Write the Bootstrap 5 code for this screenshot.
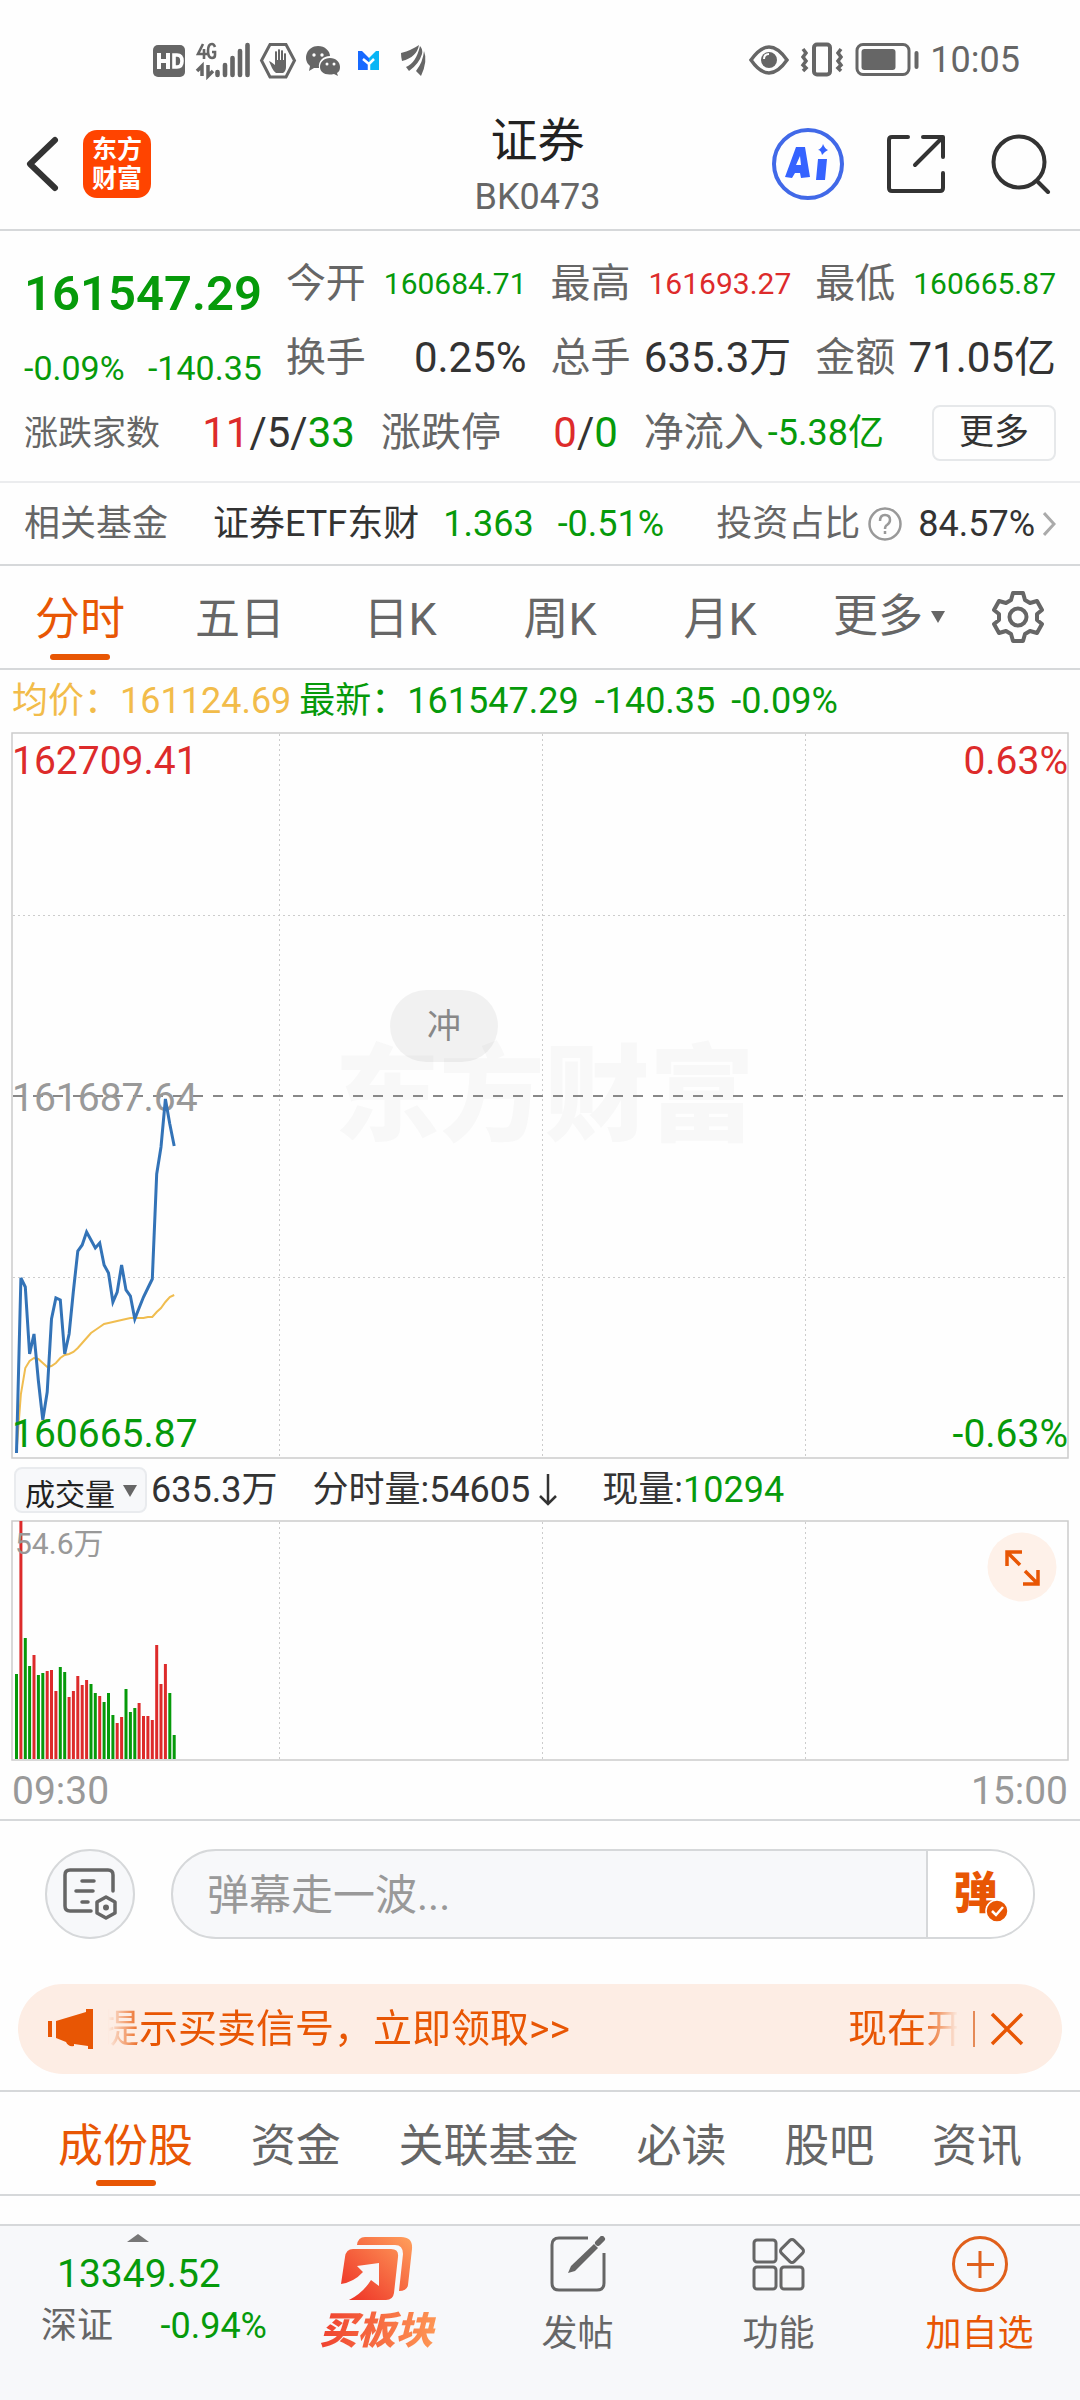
<!DOCTYPE html>
<html lang="zh-CN">
<head>
<meta charset="utf-8">
<meta name="viewport" content="width=device-width, initial-scale=1">
<title>证券 BK0473</title>
<link rel="stylesheet" href="https://cdn.jsdelivr.net/npm/bootstrap@5.3.0/dist/css/bootstrap.min.css">
<style>
:root{--up:#dd2b2b;--down:#069a0a;--accent:#e85604;--ink:#333;--soft:#666;--faint:#999;--line:#d6d8da;--pale:#f7f8fa}
body{font-family:Roboto,"Noto Sans CJK SC",sans-serif;color:var(--ink);font-size:36px;line-height:48px;background:#fefefe}
a{color:inherit;text-decoration:none}
button{background:none;border:0;padding:0;color:inherit}
svg{display:block;flex:none}
.up{color:var(--up)}.down{color:var(--down)}.soft{color:var(--soft)}.faint{color:var(--faint)}.accent{color:var(--accent)}
.fs-30{font-size:30px}.fs-34{font-size:34px}.fs-39{font-size:39px}.fs-40{font-size:40px}.fs-42{font-size:42px}.fs-45{font-size:45px}
.rule-b{border-bottom:2px solid var(--line)}
.rule-t{border-top:2px solid var(--line)}
.status-bar{height:96px;padding:24px 60px 0 152px}
.title-bar{height:135px;padding:2px 29px 0 24px}
.title-bar .side{flex:1 1 0}
.app-logo{width:68px;height:68px;border-radius:14px;background:#ff4400;color:#fff;font-size:25px;line-height:29px;font-weight:700;text-align:center;padding-top:5px;margin-left:23px}
.title-bar h1{font-size:47px;line-height:60px;color:#222}
.heading{padding-top:6px}
.code{line-height:52px}
.share{margin:0 46px 0 43px}
.quote{padding:25px 24px 18px}
.quote-grid{display:grid;grid-template-columns:237fr repeat(3,241fr);column-gap:24px;grid-auto-rows:56px;row-gap:18px}
.price{font-size:49px;font-weight:600;line-height:56px;padding-top:10px}
.change{padding-top:14px}
.stats{column-gap:26px;margin-top:17px;height:60px}
.stats .rises{flex:331 1 0}.stats .limits{flex:237 1 0}
.more-btn{width:124px;height:56px;border:2px solid #e6e8ea;border-radius:8px;font-size:35px;line-height:50px;margin-left:22px}
.fund{height:85px;padding:0 24px;border-top:2px solid #ebecee}
.fund-name{margin-left:45px}
.period{height:104px;padding-right:22px}
.period>*{flex:160 1 0;height:102px;line-height:108px;text-align:center;position:relative}
.period .wide{flex-grow:178}.period .slim{flex-grow:80}
.on-tab{position:relative}
.on-tab::after{content:"";position:absolute;left:50%;bottom:8px;width:60px;height:6px;margin-left:-30px;border-radius:3px;background:var(--accent)}
.tri{display:inline-block;width:0;height:0;border:7px solid transparent;border-top:12px solid currentColor;border-bottom:0}
.legend-row{height:62px;padding:0 12px;color:var(--down)}
.avg{color:#f2bc4a}
.plot{margin:0 11px;position:relative}
.plot svg{width:100%;height:auto}
.mark-text{position:absolute;left:30%;top:42%;padding-left:6px;font-size:105px;line-height:120px;font-weight:900;color:#f8f8f8}
.bullet{position:absolute;left:379px;top:258px;width:108px;height:72px;border-radius:36px;background:rgba(0,0,0,.05);color:#888;font-size:34px;line-height:72px;text-align:center}
.vol-row{height:61px;padding:0 14px}
.picker{border:2px solid #e9ebee;border-radius:8px;background:var(--pale);width:133px;height:46px}
.picker select{appearance:none;border:0;background:none;color:#222;font-size:30px;line-height:30px;width:100%;height:42px;padding:0 0 9px 9px;outline:0}
.picker .tri{position:absolute;right:8px;top:16px;color:#666;pointer-events:none}
.minute-vol{margin-left:35px}.now-vol{margin-left:44px}
.expand{position:absolute;right:12px;top:12px}
.times{height:60px;padding:2px 12px 0}
.chat{padding:28px 45px 45px;gap:36px}
.round-btn{width:90px;height:90px;border:2px solid var(--line);border-radius:50%;background:var(--pale)}
.chat-box{height:90px;border:2px solid var(--line);border-radius:45px;background:var(--pale);overflow:hidden}
.chat-box input{border:0;background:none;outline:0;padding:4px 0 0 34px;font-size:42px;color:var(--ink);min-width:0}
.chat-box input::placeholder{color:#999;opacity:1}
.send{width:107px;background:#fff;border-left:2px solid var(--line);font-size:44px;font-weight:800;color:var(--accent);position:relative;line-height:84px;padding-right:10px}
.send svg{position:absolute;left:57px;top:48px}
.notice{height:90px;margin:0 18px 16px;border-radius:45px;background:#fdede4;color:var(--accent);font-size:39px;padding:0 38px 0 30px}
.roll{overflow:hidden;white-space:nowrap;margin-left:6px;-webkit-mask-image:linear-gradient(90deg,transparent 8px,#000 44px);mask-image:linear-gradient(90deg,transparent 8px,#000 44px)}
.cut{overflow:hidden;white-space:nowrap;width:109px;-webkit-mask-image:linear-gradient(90deg,#000 74px,transparent 110px);mask-image:linear-gradient(90deg,#000 74px,transparent 110px)}
.bar-v{width:2px;height:36px;background:#e58a57;margin:0 15px 0 16px}
.sections{height:106px;padding:0 58px;line-height:109px}
.sections a{height:102px}
.dock{height:176px;background:var(--pale)}
.dock-item{flex:1 1 0}
.index{width:276px;flex:none;padding:8px 9px 0 41px}
.dock-item{padding-top:10px;line-height:52px}
.dock-item svg{margin-bottom:12px}
.buy{line-height:48px;margin-top:-7px;font-weight:900;font-style:italic;font-size:38px;background:linear-gradient(100deg,#ee3a2c,#ff9b56);-webkit-background-clip:text;background-clip:text;color:transparent;padding:0 4px}
</style>
</head>
<body class="d-flex flex-column min-vh-100">

<div class="status-bar d-flex align-items-center justify-content-between soft">
  <svg width="280" height="40" viewBox="152 39 280 40" fill="#666">
    <rect x="153" y="44" width="32" height="32" rx="5"/>
    <path d="M159 52v16M168 52v16M159 60h9" fill="none" stroke="#fff" stroke-width="4"/>
    <path d="M174 54h3q5 0 5 6t-5 6h-3z" fill="none" stroke="#fff" stroke-width="3.600"/>
    <path d="M203 43l-5 10h9M204 48v10M215 46q-1-3-3-3-4 0-4 7t4 7q3 0 3-3v-3h-3" fill="none" stroke="#666" stroke-width="2.600"/>
    <path d="M202 75V65l-5 5M208 64v11l5-5" fill="none" stroke="#666" stroke-width="3.500"/>
    <path d="M217.500 71v3M225 64v10M232.500 57v17M240 50v24M247.500 44v30" stroke="#666" stroke-width="4.600" stroke-linecap="round"/>
    <path d="M270 43.500h16l8.500 16-8.500 16.500h-16l-8.500-16.500z" fill="none" stroke="#666" stroke-width="3"/>
    <path d="M271 61l-2-1 3 7q2 4 4 5h7q3-2 3-6V53q-1-2-2 0v6h-1v-9q-1-2-2 0v9h-1V49q-1-2-2 0v10h-1v-8q-1-2-2 0v13z"/>
    <path d="M318 45c7 0 12 5 12 10-7 0-12 5-11 12l-5 0-5 3 1-5c-8-7-3-20 8-20z"/>
    <path d="M330 57c6 0 10 4 10 9 0 3-1 5-3 6l1 3-4-2c-9 2-14-2-14-7s4-9 10-9z"/>
    <g fill="#fff"><circle cx="314" cy="54" r="1.700"/><circle cx="322" cy="54" r="1.700"/><circle cx="327" cy="63" r="1.500"/><circle cx="334" cy="63" r="1.500"/></g>
    <path d="M358 50h4l7 7v12h-11z" fill="#1769ff"/><path d="M369 57l7-7h3v19h-10z" fill="#09b5f5"/><path d="M363 58l6 5 5-5M369 62v7" stroke="#fff" stroke-width="2.500" fill="none"/>
    <path d="M401 52q11-3 18-8-2 12-17 16-1-4-1-8zM420 45q3 3 2 8-3 10-13 17l-3-4q10-4 14-21zM424 50q4 10-3 25l-5-5q7-9 8-20z"/>
  </svg>
  <div class="d-flex align-items-center">
    <svg width="180" height="40" viewBox="747 39 180 40" fill="none" stroke="#666">
      <path d="M752 59q18-26 36 0-18 26-36 0z" stroke-width="3.500"/><circle cx="770" cy="59" r="8" fill="#666" stroke="none"/><path d="M765 58q0-5 5-5" stroke="#fff" stroke-width="2"/>
      <rect x="815" y="43.500" width="16" height="30" rx="3" stroke-width="4"/>
      <path d="M804 48l3 4-3 4 3 4-3 4 3 3-3 3M842 48l-3 4 3 4-3 4 3 4-3 3 3 3" stroke-width="3.500"/>
      <rect x="858" y="43.500" width="52" height="30" rx="6" stroke-width="3"/><rect x="862.500" y="48" width="34" height="21" rx="3" fill="#666" stroke="none"/><path d="M917.500 52v14" stroke-width="4" stroke-linecap="round"/>
    </svg>
    <span class="ps-1">10:05</span>
  </div>
</div>

<header class="title-bar d-flex align-items-center rule-b">
  <div class="side d-flex align-items-center">
    <button type="button" aria-label="返回"><svg width="36" height="60" viewBox="0 0 36 60" fill="none" stroke="#333" stroke-width="6" stroke-linecap="round" stroke-linejoin="round"><path d="M31 6L6 30l25 24"/></svg></button>
    <div class="app-logo">东方<br>财富</div>
  </div>
  <div class="heading text-center">
    <h1 class="m-0 fw-normal">证券</h1>
    <div class="soft code">BK0473</div>
  </div>
  <div class="side d-flex align-items-center justify-content-end">
    <button type="button" aria-label="AI"><svg width="72" height="72" viewBox="0 0 72 72"><circle cx="36" cy="36" r="34" fill="none" stroke="#4169e8" stroke-width="4"/><path fill="#3563ff" fill-rule="evenodd" d="M24 19h9l5 30-9 1-1-5h-5l-3 5-7-1zM28 28l-4 9h5zM46 31h9l-2 21h-9zM51 16q2 5 5 6-4 2-6 5-1-5-4-5 4-2 5-6z"/></svg></button>
    <button type="button" aria-label="分享" class="share"><svg width="58" height="58" viewBox="0 0 58 58" fill="none" stroke="#333" stroke-width="4" stroke-linecap="round" stroke-linejoin="round"><path d="M21 2H5q-3 0-3 3v48q0 3 3 3h48q3 0 3-3V38M36 2h20v20M55 3L28 30"/></svg></button>
    <button type="button" aria-label="搜索"><svg width="60" height="60" viewBox="0 0 60 60" fill="none" stroke="#333" stroke-width="4" stroke-linecap="round"><circle cx="28" cy="28" r="25.500"/><path d="M47 48l10 10"/></svg></button>
  </div>
</header>

<section class="quote">
  <div class="quote-grid text-nowrap">
    <div class="price down">161547.29</div>
    <div class="d-flex justify-content-between align-items-center"><span class="fs-40 soft">今开</span><span class="fs-30 down">160684.71</span></div>
    <div class="d-flex justify-content-between align-items-center"><span class="fs-40 soft">最高</span><span class="fs-30 up">161693.27</span></div>
    <div class="d-flex justify-content-between align-items-center"><span class="fs-40 soft">最低</span><span class="fs-30 down">160665.87</span></div>
    <div class="change d-flex justify-content-between fs-34 down"><span>-0.09%</span><span>-140.35</span></div>
    <div class="d-flex justify-content-between align-items-center"><span class="fs-40 soft">换手</span><span class="fs-42">0.25%</span></div>
    <div class="d-flex justify-content-between align-items-center"><span class="fs-40 soft">总手</span><span class="fs-42">635.3万</span></div>
    <div class="d-flex justify-content-between align-items-center"><span class="fs-40 soft">金额</span><span class="fs-42">71.05亿</span></div>
  </div>
  <div class="stats d-flex align-items-center text-nowrap">
    <div class="rises d-flex align-items-center justify-content-between"><span class="fs-34 soft">涨跌家数</span><span class="fs-42"><span class="up">11</span>/5/<span class="down">33</span></span></div>
    <div class="limits d-flex align-items-center justify-content-between"><span class="fs-40 soft">涨跌停</span><span class="fs-42"><span class="up">0</span>/<span class="down">0</span></span></div>
    <div class="d-flex align-items-center"><span class="fs-40 soft me-1">净流入</span><span class="down">-5.38亿</span></div>
    <button type="button" class="more-btn">更多</button>
  </div>
</section>

<a href="#" class="fund d-flex align-items-center rule-b text-nowrap">
  <span class="soft">相关基金</span>
  <span class="fund-name">证券ETF东财</span>
  <span class="down ms-4">1.363</span>
  <span class="down ms-4">-0.51%</span>
  <span class="soft ms-auto">投资占比</span>
  <svg class="ms-2 me-3" width="34" height="34" viewBox="0 0 34 34" fill="none" stroke="#999" stroke-width="2.500"><circle cx="17" cy="17" r="15.500"/><path d="M12 14q0-6 5-6t5 5q0 3-3 5-2 1-2 4M17 24v3"/></svg>
  <span>84.57%</span>
  <svg class="ms-2" width="13" height="26" viewBox="0 0 13 26" fill="none" stroke="#aaa" stroke-width="3"><path d="M1 2l10 11L1 24"/></svg>
</a>

<nav class="period d-flex align-items-center rule-b fs-45 soft text-nowrap">
  <a href="#" class="on-tab accent" aria-current="page">分时</a>
  <a href="#">五日</a>
  <a href="#">日K</a>
  <a href="#">周K</a>
  <a href="#">月K</a>
  <button type="button" class="wide d-flex align-items-center justify-content-center">更多<span class="tri ms-2"></span></button>
  <button type="button" class="slim d-flex align-items-center justify-content-center" aria-label="设置"><svg width="54" height="54" viewBox="0 0 54 54" fill="none" stroke="#666" stroke-width="4" stroke-linejoin="round"><path d="M22 3h10l2 7 5 3 7-2 5 9-5 4v6l5 4-5 9-7-2-5 3-2 7H22l-2-7-5-3-7 2-5-9 5-4v-6l-5-4 5-9 7 2 5-3z"/><circle cx="27" cy="27" r="8.500"/></svg></button>
</nav>

<div class="legend-row d-flex align-items-center text-nowrap">
  <span class="avg">均价：161124.69</span>
  <span class="ms-2">最新：161547.29</span>
  <span class="ms-3">-140.35</span>
  <span class="ms-3">-0.09%</span>
</div>

<div class="plot">
  <div class="mark-text">东方财富</div>
  <svg class="position-relative" viewBox="0 0 1058 727" fill="none" role="img" aria-label="分时走势">
    <path d="M1 1h1056v725H1z" stroke="#ccc" stroke-width="1.500"/>
    <path d="M268.500 2v723M531.500 2v723M794.500 2v723M2 183.500h1054M2 545.500h1054" stroke="#ccc" stroke-dasharray="2 3"/>
    <path d="M2 364h1054" stroke="#888" stroke-width="2" stroke-dasharray="10 10"/>
    <polyline id="avgLine" stroke="#f0bd50" stroke-width="2"/>
    <g font-size="39" font-family="Roboto">
      <text x="1" y="42" fill="#dd2b2b">162709.41</text>
      <text x="1057" y="42" text-anchor="end" fill="#dd2b2b">0.63%</text>
      <text x="1" y="379" fill="#999">161687.64</text>
    </g>
    <polyline id="priceLine" stroke="#3373b7" stroke-width="3"/>
    <g font-size="39" font-family="Roboto" fill="#069a0a">
      <text x="1" y="715">160665.87</text>
      <text x="1057" y="715" text-anchor="end">-0.63%</text>
    </g>
  </svg>
  <div class="bullet">冲</div>
</div>

<div class="vol-row d-flex align-items-center text-nowrap">
  <div class="picker position-relative"><select aria-label="指标"><option>成交量</option></select><span class="tri"></span></div>
  <span class="ps-1">635.3万</span>
  <span class="minute-vol">分时量:54605</span>
  <svg class="ms-2" width="20" height="36" viewBox="0 0 20 36" fill="none" stroke="#333" stroke-width="2.500"><path d="M10 2v30M2 24l8 8 8-8"/></svg>
  <span class="now-vol">现量:<span class="down">10294</span></span>
</div>

<div class="plot">
  <svg viewBox="0 0 1058 241" fill="none" role="img" aria-label="成交量">
    <path d="M1 1h1056v239H1z" stroke="#ccc" stroke-width="1.500"/>
    <path d="M268.500 2v237M531.500 2v237M794.500 2v237" stroke="#ccc" stroke-dasharray="2 3"/>
    <g id="volBars"></g>
    <text x="4" y="34" font-size="30" font-family="Roboto,'Noto Sans CJK SC'" fill="#999">54.6万</text>
  </svg>
  <button type="button" class="expand" aria-label="放大"><svg width="70" height="70" viewBox="0 0 70 70"><circle cx="35" cy="35" r="34.500" fill="#fef1e9"/><path d="M20 34V20h15M21 21l12 12M51 38v14H36M50 51L38 39" fill="none" stroke="#e85604" stroke-width="3.500"/></svg></button>
</div>

<div class="times d-flex justify-content-between align-items-center fs-39 faint rule-b"><span>09:30</span><span>15:00</span></div>

<div class="chat d-flex align-items-center">
  <button type="button" class="round-btn d-flex align-items-center justify-content-center flex-shrink-0" aria-label="弹幕设置"><svg width="56" height="52" viewBox="0 0 56 52" fill="none" stroke="#666" stroke-width="3.500" stroke-linecap="round"><path d="M29 43H8q-5 0-5-5V7q0-5 5-5h38q5 0 5 5v16M20 13h12M14 23h17M20 34h6"/><path d="M44 29l9 5v11l-9 5-9-5V34z" stroke-linejoin="round"/><circle cx="44" cy="39.500" r="2" fill="#666" stroke-width="2"/></svg></button>
  <div class="chat-box d-flex flex-grow-1">
    <input class="flex-grow-1" type="text" placeholder="弹幕走一波..." aria-label="弹幕">
    <button type="button" class="send">弹<svg width="24" height="24" viewBox="0 0 24 24"><circle cx="12" cy="12" r="11" fill="#e85604" stroke="#fff" stroke-width="1.500"/><path d="M7 12l4 4 7-8" fill="none" stroke="#fff" stroke-width="2.500"/></svg></button>
  </div>
</div>

<div class="notice d-flex align-items-center">
  <svg width="46" height="40" viewBox="0 0 46 40" fill="#e85604"><path d="M0 12h4v16H0zM8 12L38 3v-3h7v40h-5v-3l-14-2v2q-6 1-8-4l-10-4z"/></svg>
  <div class="roll flex-grow-1">提示买卖信号，立即领取&gt;&gt;</div>
  <div class="cut">现在开</div>
  <span class="bar-v"></span>
  <button type="button" aria-label="关闭"><svg width="34" height="34" viewBox="0 0 34 34" stroke="#e85604" stroke-width="3.500"><path d="M2 2l30 30M32 2L2 32"/></svg></button>
</div>

<nav class="sections d-flex justify-content-between rule-t rule-b fs-45 soft text-nowrap">
  <a href="#" class="on-tab accent" aria-current="page">成份股</a>
  <a href="#">资金</a>
  <a href="#">关联基金</a>
  <a href="#">必读</a>
  <a href="#">股吧</a>
  <a href="#">资讯</a>
</nav>

<footer class="dock d-flex rule-t mt-auto text-nowrap soft">
  <a href="#" class="index">
    <svg width="194" height="8" viewBox="0 0 194 8"><path d="M86 8L97 0l11 8z" fill="#777"/></svg>
    <div class="fs-39 down ps-3 pt-2">13349.52</div>
    <div class="d-flex justify-content-between pt-1"><span>深证</span><span class="down">-0.94%</span></div>
  </a>
  <a href="#" class="dock-item d-flex flex-column align-items-center">
    <svg width="72" height="66" viewBox="0 0 72 66"><defs><linearGradient id="g" x1="0" y1="1" x2="1" y2="0"><stop offset="0" stop-color="#ed2d24"/><stop offset="1" stop-color="#ffa05c"/></linearGradient></defs><path fill="url(#g)" d="M16 9q1-8 8-8h36q12 0 11 12l-4 36q-1 6-9 6l4-37q0-9-8-9zM4 21q1-8 8-8h38q8 0 7 8l-4 36q-1 7-8 7H8q14-7 22-20l8 6V27l-22 3 6 6Q13 46 0 48z"/></svg>
    <span class="buy">买板块</span>
  </a>
  <a href="#" class="dock-item d-flex flex-column align-items-center">
    <svg width="56" height="56" viewBox="0 0 56 56" fill="none" stroke="#666" stroke-width="3"><path d="M38 2H9Q2 2 2 9v38q0 7 7 7h38q7 0 7-7V17"/><path d="M18 37l3-7L44 8l4 4-23 23z" fill="#666" stroke="none"/><path d="M48 7l4-4" stroke-width="6" stroke-linecap="round"/></svg>
    <span class="pt-1">发帖</span>
  </a>
  <a href="#" class="dock-item d-flex flex-column align-items-center">
    <svg width="56" height="56" viewBox="0 0 56 56" fill="none" stroke="#666" stroke-width="3"><rect x="3" y="4" width="22" height="22" rx="3"/><rect x="3" y="31" width="22" height="22" rx="3"/><rect x="30" y="31" width="22" height="22" rx="3"/><rect x="32" y="6" width="18" height="18" rx="3" transform="rotate(45 41 15)"/></svg>
    <span class="pt-1">功能</span>
  </a>
  <a href="#" class="dock-item d-flex flex-column align-items-center accent">
    <svg width="58" height="56" viewBox="0 0 58 56" fill="none" stroke="#e0601c" stroke-width="3"><circle cx="29" cy="28" r="26.500"/><path d="M29 15v27M16 28.500h27"/></svg>
    <span class="pt-1">加自选</span>
  </a>
</footer>

<script>
// One sample per minute from 09:30; the session holds 241 of them across the plot.
const step = 4.38, start = 5.5;
const price = [721,546,555,622,602,649,688,660,587,566,568,622,602,559,519,513,500,508,516,511,533,541,570,560,533,558,564,587,576,565,556,547,442,415,367,392,414];
const avg = [720,662,636,629,626,627,631,635,634,631,626,623,622,620,616,611,606,601,598,595,592,591,590,589,588,587,586,586,586,586,585,585,580,576,570,565,563];
const vol = [85,238,121,93,104,84,86,88,89,68,92,87,62,68,83,74,79,75,66,63,57,66,44,36,42,70,47,51,56,43,43,39,114,75,95,66,24];
const dir = "gRggRggRRRggRRRRRggRgggRRgggRRRRRRRgg";
const pts = a => a.map((v, i) => (start + i * step).toFixed(1) + "," + v).join(" ");
document.getElementById("priceLine").setAttribute("points", pts(price));
document.getElementById("avgLine").setAttribute("points", pts(avg));
document.getElementById("volBars").innerHTML = vol.map((v, i) =>
  `<rect x="${(start + i * step - 1.5).toFixed(1)}" y="${239 - v}" width="3" height="${v}" fill="${dir[i] === "R" ? "#dd2b2b" : "#069a0a"}"/>`).join("");
</script>
<script src="https://cdn.jsdelivr.net/npm/bootstrap@5.3.0/dist/js/bootstrap.bundle.min.js"></script>
</body>
</html>
